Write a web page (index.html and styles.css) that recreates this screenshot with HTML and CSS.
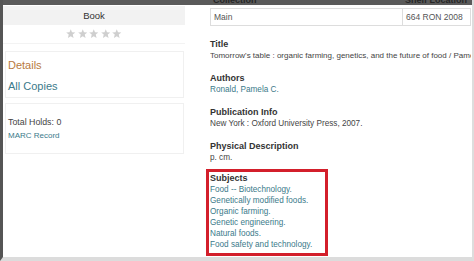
FILE: index.html
```html
<!DOCTYPE html>
<html lang="en">
<head>
<meta charset="utf-8">
<title>Record details</title>
<link rel="stylesheet" href="styles.css">
</head>
<body>
<div class="screen">
  <div class="topbar">
    <span class="th th-col">Collection</span>
    <span class="th th-shelf">Shelf Location</span>
  </div>
  <div class="main">
    <aside class="side">
      <div class="format">Book</div>
      <div class="stars">
        <svg class="star" viewBox="0 0 10 10"><polygon points="5,0.3 6.3,3.5 9.8,3.7 7.1,5.9 8,9.5 5,7.5 2,9.5 2.9,5.9 0.2,3.7 3.7,3.5"/></svg>
        <svg class="star" viewBox="0 0 10 10"><polygon points="5,0.3 6.3,3.5 9.8,3.7 7.1,5.9 8,9.5 5,7.5 2,9.5 2.9,5.9 0.2,3.7 3.7,3.5"/></svg>
        <svg class="star" viewBox="0 0 10 10"><polygon points="5,0.3 6.3,3.5 9.8,3.7 7.1,5.9 8,9.5 5,7.5 2,9.5 2.9,5.9 0.2,3.7 3.7,3.5"/></svg>
        <svg class="star" viewBox="0 0 10 10"><polygon points="5,0.3 6.3,3.5 9.8,3.7 7.1,5.9 8,9.5 5,7.5 2,9.5 2.9,5.9 0.2,3.7 3.7,3.5"/></svg>
        <svg class="star" viewBox="0 0 10 10"><polygon points="5,0.3 6.3,3.5 9.8,3.7 7.1,5.9 8,9.5 5,7.5 2,9.5 2.9,5.9 0.2,3.7 3.7,3.5"/></svg>
      </div>
      <nav class="box nav">
        <a class="nav-link active" href="#">Details</a>
        <a class="nav-link" href="#">All Copies</a>
      </nav>
      <div class="box holds">
        <div class="holds-count">Total Holds: 0</div>
        <a class="marc" href="#">MARC Record</a>
      </div>
    </aside>
    <section class="content">
      <div class="copy-row">
        <span class="cell cell-col">Main</span>
        <span class="cell cell-shelf">664 RON 2008</span>
      </div>
      <div class="field">
        <div class="label">Title</div>
        <div class="value nowrap">Tomorrow's table : organic farming, genetics, and the future of food / Pamela C. Ronald and Raoul W. Adamchak.</div>
      </div>
      <div class="field">
        <div class="label">Authors</div>
        <a class="value link" href="#">Ronald, Pamela C.</a>
      </div>
      <div class="field">
        <div class="label">Publication Info</div>
        <div class="value">New York : Oxford University Press, 2007.</div>
      </div>
      <div class="field field-tight">
        <div class="label">Physical Description</div>
        <div class="value">p. cm.</div>
      </div>
      <div class="field subjects">
        <div class="label">Subjects</div>
        <a class="value link" href="#">Food -- Biotechnology.</a>
        <a class="value link" href="#">Genetically modified foods.</a>
        <a class="value link" href="#">Organic farming.</a>
        <a class="value link" href="#">Genetic engineering.</a>
        <a class="value link" href="#">Natural foods.</a>
        <a class="value link" href="#">Food safety and technology.</a>
      </div>
    </section>
  </div>
</div>
</body>
</html>
```

FILE: styles.css
```css
* { box-sizing: border-box; }
html, body { margin: 0; padding: 0; background: #fff; }
body { font-family: "Liberation Sans", Arial, sans-serif; }

.screen {
  width: 474px;
  height: 261px;
  border-left: 3px solid #555;
  border-right: 2px solid #ddd;
  border-bottom: 4px solid #dcdcdc;
  overflow: hidden;
  background: #fff;
}

.topbar {
  height: 5px;
  background: #5a5a5a;
  display: flex;
  align-items: flex-end;
  overflow: hidden;
  padding-left: 207px;
}
.th {
  font-size: 9px;
  font-weight: bold;
  line-height: 10px;
  height: 10px;
  flex: none;
  color: #262626;
  padding-left: 3px;
}
.th-col { width: 192px; }

.main {
  display: flex;
}

.side {
  width: 182px;
  flex: none;
  padding-top: 1px;
}
.format {
  background: #f2f2f2;
  height: 19px;
  line-height: 19px;
  text-align: center;
  font-size: 9.5px;
  color: #333;
}
.stars {
  display: flex;
  justify-content: center;
  gap: 2px;
  height: 19px;
  align-items: center;
  border-bottom: 1px solid #f3f3f3;
}
.star { width: 9.5px; height: 9.5px; fill: #cfcfcf; }

.box {
  border: 1px solid #f0f0f0;
  margin: 0 1px 0 2px;
}
.nav {
  margin-top: 7px;
  height: 47px;
  display: flex;
  flex-direction: column;
  padding: 6px 0 0 2px;
  gap: 7px;
}
.nav-link {
  font-size: 11px;
  line-height: 14px;
  color: #3b7a8a;
  text-decoration: none;
}
.nav-link.active { color: #b87a3e; }

.holds {
  margin-top: 5px;
  height: 51px;
  padding: 12px 0 0 2px;
}
.holds-count {
  font-size: 8.8px;
  line-height: 12px;
  color: #444;
}
.marc {
  display: block;
  margin-top: 2px;
  font-size: 8px;
  line-height: 12px;
  color: #3b7a8a;
  text-decoration: none;
}

.content {
  margin-left: 25px;
  width: 261px;
  flex: none;
  padding-top: 3px;
  white-space: nowrap;
}
.copy-row {
  display: flex;
  border: 1px solid #ddd;
  height: 18px;
  margin-bottom: 13px;
}
.cell {
  font-size: 8.5px;
  line-height: 16px;
  color: #555;
  padding-left: 3px;
}
.cell-col { width: 192px; border-right: 1px solid #ddd; }

.field { margin-bottom: 12px; }
.field-tight { margin-bottom: 6px; }
.label {
  font-size: 9px;
  font-weight: bold;
  line-height: 11px;
  color: #333;
}
.value {
  display: block;
  font-size: 8.2px;
  line-height: 11px;
  color: #444;
  text-decoration: none;
}
.value.link { color: #3b7a8a; }
.nowrap { white-space: nowrap; overflow: hidden; font-size: 8px; }

.subjects {
  width: 122px;
  margin-left: -4px;
  border: 3px solid #d31f2b;
  padding: 1px 0 3px 1px;
}
```
